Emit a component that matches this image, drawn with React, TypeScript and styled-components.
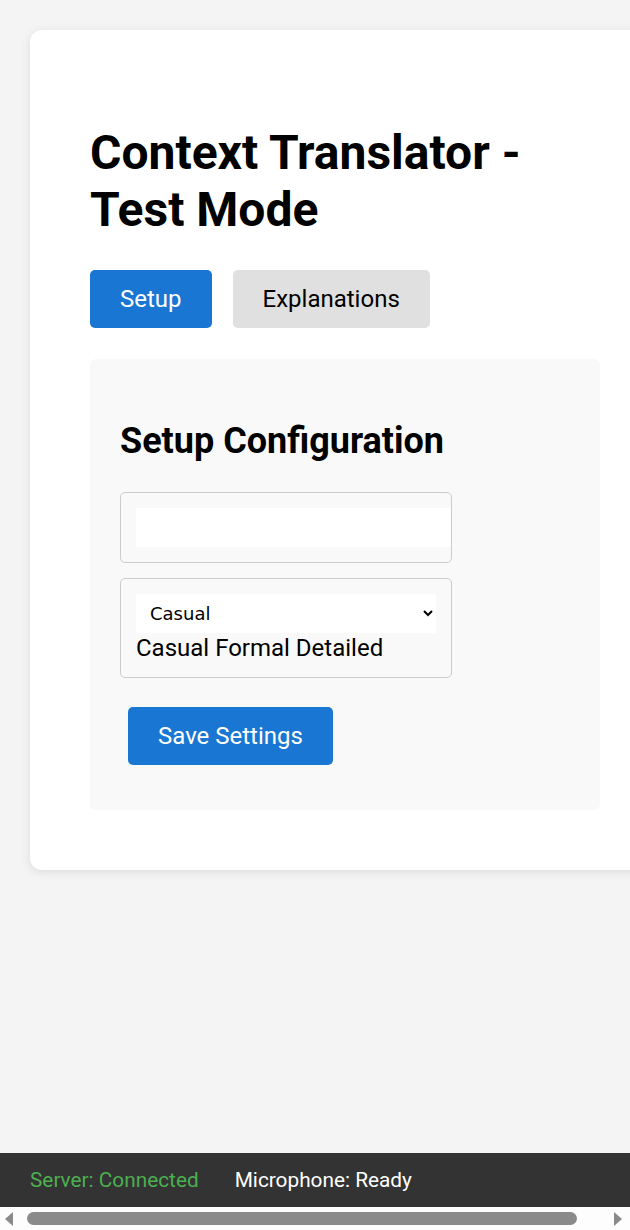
import React from "react";
import styled, { createGlobalStyle } from "styled-components";

const Global = createGlobalStyle`
  html, body {
    margin: 0;
    padding: 0;
    background: #f4f4f4;
  }
  body {
    font-family: Roboto, "Liberation Sans", Arial, sans-serif;
    color: #000;
  }
`;

const Page = styled.div`
  width: fit-content;
  padding: 30px;
`;

const Card = styled.main`
  box-sizing: border-box;
  width: 630px;
  padding: 60px;
  background: #ffffff;
  border-radius: 12px;
  box-shadow: 0 2px 10px rgba(0, 0, 0, 0.1);
`;

const Title = styled.h1`
  font-size: 48px;
  font-weight: 700;
  line-height: normal;
  margin: 34px 0 32px;
`;

const Tabs = styled.nav`
  display: flex;
  gap: 21px;
  margin-bottom: 31px;
`;

const Button = styled.button<{ $active?: boolean }>`
  font-family: Roboto, "Liberation Sans", Arial, sans-serif;
  font-size: 24px;
  line-height: normal;
  padding: 15px 30px;
  border: none;
  border-radius: 5px;
  cursor: pointer;
  background: ${(p) => (p.$active ? "#1976d2" : "#e0e0e0")};
  color: ${(p) => (p.$active ? "#ffffff" : "#000000")};
`;

const SaveButton = styled(Button)`
  margin: 14px 8px 15px;
`;

const Panel = styled.section`
  background: #f9f9f9;
  border-radius: 6px;
  padding: 30px;
`;

const Heading = styled.h2`
  font-size: 36px;
  font-weight: 700;
  line-height: normal;
  margin: 31px 0 30px;
`;

const Field = styled.div`
  box-sizing: border-box;
  width: 332px;
  padding: 15px;
  margin-bottom: 15px;
  border: 1px solid #cccccc;
  border-radius: 5px;
  overflow: hidden;
  font-size: 24px;
  line-height: normal;
`;

const TextInput = styled.input`
  display: block;
  box-sizing: content-box;
  width: 100%;
  padding: 10px;
  border: none;
  outline: none;
  background: #ffffff;
  font-family: Roboto, "Liberation Sans", Arial, sans-serif;
  font-size: 16px;
  line-height: normal;
`;

const Select = styled.select`
  display: block;
  box-sizing: border-box;
  width: 100%;
  height: 39px;
  padding: 0 10px;
  border: none;
  outline: none;
  background: #ffffff;
  color: #000;
  font-family: "DejaVu Sans", Verdana, sans-serif;
  font-size: 18px;
`;

const OptionsText = styled.div`
  font-size: 24px;
  line-height: normal;
  margin-top: 1px;
`;

const StatusBar = styled.footer`
  position: fixed;
  left: 0;
  right: 0;
  bottom: 23px;
  display: flex;
  gap: 36px;
  padding: 15px 30px;
  background: #333333;
  font-size: 20.8px;
  line-height: normal;
`;

const Status = styled.span<{ $color: string }>`
  color: ${(p) => p.$color};
`;

const ScrollTrack = styled.div`
  position: fixed;
  left: 0;
  right: 0;
  bottom: 0;
  height: 23px;
  background: #fdfdfd;
  display: flex;
  align-items: center;
  padding: 0 8px 0 5px;
  box-sizing: border-box;
`;

const Arrow = styled.span<{ $dir: "left" | "right" }>`
  width: 0;
  height: 0;
  border-top: 7px solid transparent;
  border-bottom: 7px solid transparent;
  ${(p) =>
    p.$dir === "left"
      ? "border-right: 8px solid #8a8a8a;"
      : "border-left: 8px solid #8a8a8a;"}
`;

const Thumb = styled.span`
  height: 13px;
  width: 550px;
  border-radius: 7px;
  background: #8a8a8a;
  margin: 0 auto 0 14px;
`;

export default function App() {
  return (
    <>
      <Global />
      <Page>
        <Card>
          <Title>Context Translator - Test Mode</Title>
          <Tabs>
            <Button $active>Setup</Button>
            <Button>Explanations</Button>
          </Tabs>
          <Panel>
            <Heading>Setup Configuration</Heading>
            <Field>
              <TextInput type="text" />
            </Field>
            <Field>
              <Select defaultValue="casual">
                <option value="casual">Casual</option>
                <option value="formal">Formal</option>
                <option value="detailed">Detailed</option>
              </Select>
              <OptionsText>Casual Formal Detailed</OptionsText>
            </Field>
            <SaveButton $active>Save Settings</SaveButton>
          </Panel>
        </Card>
      </Page>
      <StatusBar>
        <Status $color="#4caf50">Server: Connected</Status>
        <Status $color="#ffffff">Microphone: Ready</Status>
      </StatusBar>
      <ScrollTrack aria-hidden="true">
        <Arrow $dir="left" />
        <Thumb />
        <Arrow $dir="right" />
      </ScrollTrack>
    </>
  );
}
